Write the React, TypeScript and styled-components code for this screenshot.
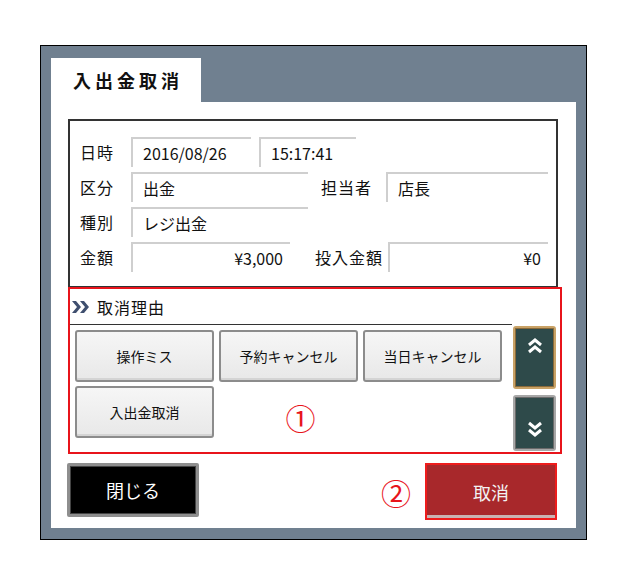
import styled, { createGlobalStyle } from 'styled-components'

const GlobalStyle = createGlobalStyle`
  html, body {
    margin: 0;
    padding: 0;
    background: #fff;
  }
  body {
    font-family: "Noto Sans CJK JP", "Noto Sans", sans-serif;
    color: #111;
  }
`

const Page = styled.div`
  padding: 45px 0 0 40px;
`

// 외곽 슬레이트 프레임
const Frame = styled.div`
  box-sizing: border-box;
  width: 547px;
  height: 495px;
  border: 1px solid #000;
  background: #708090;
  padding: 12px 10px 11px 10px;
  display: flex;
  flex-direction: column;
`

const Tab = styled.div`
  width: 150px;
  height: 44px;
  background: #fff;
  box-sizing: border-box;
  padding-left: 22px;
  display: flex;
  align-items: center;
  font-size: 18px;
  font-weight: 700;
  letter-spacing: 4px;
`

const Panel = styled.div`
  flex: 1;
  background: #fff;
  padding: 17px 0 0 17px;
  display: flex;
  flex-direction: column;
`

const InfoBox = styled.div`
  box-sizing: border-box;
  width: 490px;
  height: 168px;
  border: 2px solid #333;
  border-bottom-width: 1px;
  padding: 16px 0 0 10px;
  display: flex;
  flex-direction: column;
  gap: 5px;
`

const Row = styled.div`
  display: flex;
  align-items: center;
  height: 30px;
`

const Label = styled.div`
  width: 51px;
  font-size: 16px;
  letter-spacing: 1px;
`

const SubLabel = styled.div<{ $w: number; $pr: number }>`
  box-sizing: border-box;
  width: ${({ $w }) => $w}px;
  padding-right: ${({ $pr }) => $pr}px;
  text-align: right;
  font-size: 16px;
  letter-spacing: 1px;
`

const Field = styled.div<{ $w: number; $right?: boolean; $ml?: number }>`
  box-sizing: border-box;
  width: ${({ $w }) => $w}px;
  height: 30px;
  margin-left: ${({ $ml = 0 }) => $ml}px;
  border-top: 2px solid #cfcfcf;
  border-left: 2px solid #cfcfcf;
  display: flex;
  align-items: center;
  justify-content: ${({ $right }) => ($right ? 'flex-end' : 'flex-start')};
  padding: 0 ${({ $right }) => ($right ? '7px' : '0')} 0 ${({ $right }) => ($right ? '0' : '10px')};
  font-size: 16px;
`

const ReasonBox = styled.div`
  box-sizing: border-box;
  width: 494px;
  height: 167px;
  border: 2px solid #e8141b;
  display: flex;
  flex-direction: column;
`

const ReasonHeader = styled.div`
  height: 35px;
  margin-right: 48px;
  border-bottom: 1px solid #333;
  display: flex;
  align-items: center;
  gap: 6px;
  padding-left: 1px;
  font-size: 16px;
  letter-spacing: 1px;
`

const ReasonBody = styled.div`
  flex: 1;
  display: flex;
  padding-left: 5px;
`

const ButtonGrid = styled.div`
  display: grid;
  grid-template-columns: repeat(3, 139px);
  grid-auto-rows: 52px;
  gap: 4px 5px;
  margin-top: 5px;
`

const ReasonButton = styled.button`
  box-sizing: border-box;
  border: 2px solid #8c8c8c;
  border-radius: 3px;
  background: linear-gradient(#f6f6f6, #e8e8e8);
  box-shadow: inset 0 -2px 0 #d4d4d4;
  font-family: inherit;
  font-size: 14px;
  color: #111;
  padding: 0;
`

const Marker = styled.div<{ $size: number }>`
  color: #e8141b;
  font-family: "Noto Sans CJK JP", sans-serif;
  font-size: ${({ $size }) => $size}px;
  line-height: 1;
  display: flex;
  align-items: center;
  justify-content: center;
`

const GridMarker = styled(Marker)`
  padding-left: 24px;
  padding-top: 10px;
`

const ScrollCol = styled.div`
  display: flex;
  flex-direction: column;
  gap: 6px;
  margin-left: 11px;
  padding-top: 1px;
`

const ScrollButton = styled.button<{ $up?: boolean }>`
  box-sizing: border-box;
  width: 43px;
  height: ${({ $up }) => ($up ? 63 : 56)}px;
  background: #2e4a4a;
  border: 2px solid ${({ $up }) => ($up ? '#c9a266' : '#a7a7a7')};
  border-radius: 3px;
  box-shadow: inset 0 0 0 1px ${({ $up }) => ($up ? '#8a6a3a' : '#6a6a6a')};
  display: flex;
  justify-content: center;
  align-items: ${({ $up }) => ($up ? 'flex-start' : 'flex-end')};
  padding: ${({ $up }) => ($up ? '9px 0 0' : '0 0 11px')};
`

const Footer = styled.div`
  display: flex;
  justify-content: space-between;
  align-items: flex-start;
  padding: 9px 19px 0 0;
  margin-left: -1px;
`

const RightGroup = styled.div`
  display: flex;
  align-items: center;
  gap: 14px;
`

const CloseButton = styled.button`
  box-sizing: border-box;
  width: 132px;
  height: 54px;
  background: #000;
  color: #fff;
  border: 3px solid #8e8e8e;
  border-radius: 2px;
  box-shadow: inset 0 0 0 1px #444;
  font-family: inherit;
  font-size: 18px;
`

const CancelButton = styled.button`
  box-sizing: border-box;
  width: 132px;
  height: 57px;
  background: #a8282b;
  color: #f2f2f2;
  border: 2px solid #ee1c1c;
  box-shadow: inset 0 -3px 0 #c9b3b3;
  font-family: inherit;
  font-size: 18px;
`

const DoubleChevron = ({ up }: { up?: boolean }) => (
  <svg width="16" height="18" viewBox="0 0 16 18">
    <g fill="none" stroke="#fff" strokeWidth="3" strokeLinejoin="miter">
      {up ? (
        <>
          <polyline points="2,8 8,3 14,8" />
          <polyline points="2,15 8,10 14,15" />
        </>
      ) : (
        <>
          <polyline points="2,3 8,8 14,3" />
          <polyline points="2,10 8,15 14,10" />
        </>
      )}
    </g>
  </svg>
)

const HeaderMark = () => (
  <svg width="20" height="14" viewBox="0 0 20 14">
    <g fill="#3f4f6f">
      <polygon points="1,1 5,1 10,7 5,13 1,13 6,7" />
      <polygon points="9,1 13,1 18,7 13,13 9,13 14,7" />
    </g>
  </svg>
)

const reasons = ['操作ミス', '予約キャンセル', '当日キャンセル', '入出金取消']

const App = () => {
  return (
    <Page>
      <GlobalStyle />
      <Frame>
        <Tab>入出金取消</Tab>
        <Panel>
          <InfoBox>
            <Row>
              <Label>日時</Label>
              <Field $w={120}>2016/08/26</Field>
              <Field $w={97} $ml={8}>
                15:17:41
              </Field>
            </Row>
            <Row>
              <Label>区分</Label>
              <Field $w={177}>出金</Field>
              <SubLabel $w={78} $pr={14}>
                担当者
              </SubLabel>
              <Field $w={162}>店長</Field>
            </Row>
            <Row>
              <Label>種別</Label>
              <Field $w={177}>レジ出金</Field>
            </Row>
            <Row>
              <Label>金額</Label>
              <Field $w={159} $right>
                ¥3,000
              </Field>
              <SubLabel $w={98} $pr={5}>
                投入金額
              </SubLabel>
              <Field $w={160} $right>
                ¥0
              </Field>
            </Row>
          </InfoBox>

          <ReasonBox>
            <ReasonHeader>
              <HeaderMark />
              取消理由
            </ReasonHeader>
            <ReasonBody>
              <ButtonGrid>
                {reasons.map((r) => (
                  <ReasonButton key={r}>{r}</ReasonButton>
                ))}
                <GridMarker $size={30}>①</GridMarker>
              </ButtonGrid>
              <ScrollCol>
                <ScrollButton $up>
                  <DoubleChevron up />
                </ScrollButton>
                <ScrollButton>
                  <DoubleChevron />
                </ScrollButton>
              </ScrollCol>
            </ReasonBody>
          </ReasonBox>

          <Footer>
            <CloseButton>閉じる</CloseButton>
            <RightGroup>
              <Marker $size={30}>②</Marker>
              <CancelButton>取消</CancelButton>
            </RightGroup>
          </Footer>
        </Panel>
      </Frame>
    </Page>
  )
}

export default App
